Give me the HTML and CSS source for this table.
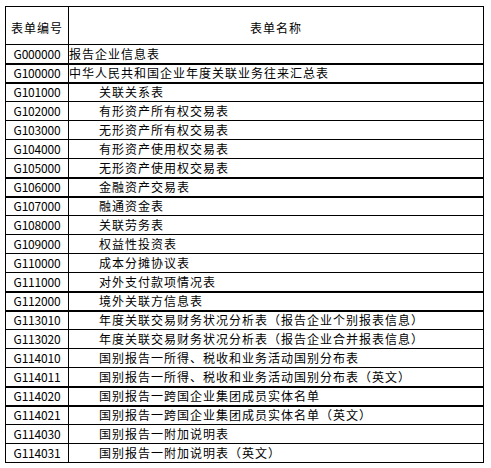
FILE: index.html
```html
<!DOCTYPE html>
<html lang="zh-CN">
<head>
<meta charset="utf-8">
<title>表单</title>
<link rel="stylesheet" href="styles.css">
</head>
<body>
<div class="page">
<table class="forms">
  <colgroup><col class="c-code"><col class="c-name"></colgroup>
  <thead>
    <tr class="head"><th>表单编号</th><th>表单名称</th></tr>
  </thead>
  <tbody>
    <tr class="thick"><td class="code">G000000</td><td class="name">报告企业信息表</td></tr>
    <tr class="thick"><td class="code">G100000</td><td class="name">中华人民共和国企业年度关联业务往来汇总表</td></tr>
    <tr><td class="code">G101000</td><td class="name sub">关联关系表</td></tr>
    <tr><td class="code">G102000</td><td class="name sub">有形资产所有权交易表</td></tr>
    <tr><td class="code">G103000</td><td class="name sub">无形资产所有权交易表</td></tr>
    <tr><td class="code">G104000</td><td class="name sub">有形资产使用权交易表</td></tr>
    <tr class="thick"><td class="code">G105000</td><td class="name sub">无形资产使用权交易表</td></tr>
    <tr class="thick"><td class="code">G106000</td><td class="name sub">金融资产交易表</td></tr>
    <tr><td class="code">G107000</td><td class="name sub">融通资金表</td></tr>
    <tr><td class="code">G108000</td><td class="name sub">关联劳务表</td></tr>
    <tr><td class="code">G109000</td><td class="name sub">权益性投资表</td></tr>
    <tr><td class="code">G110000</td><td class="name sub">成本分摊协议表</td></tr>
    <tr class="thick"><td class="code">G111000</td><td class="name sub">对外支付款项情况表</td></tr>
    <tr class="thick"><td class="code">G112000</td><td class="name sub">境外关联方信息表</td></tr>
    <tr><td class="code">G113010</td><td class="name sub">年度关联交易财务状况分析表（报告企业个别报表信息）</td></tr>
    <tr><td class="code">G113020</td><td class="name sub">年度关联交易财务状况分析表（报告企业合并报表信息）</td></tr>
    <tr><td class="code">G114010</td><td class="name sub">国别报告一所得、税收和业务活动国别分布表</td></tr>
    <tr class="thick"><td class="code">G114011</td><td class="name sub">国别报告一所得、税收和业务活动国别分布表（英文）</td></tr>
    <tr class="thick"><td class="code">G114020</td><td class="name sub">国别报告一跨国企业集团成员实体名单</td></tr>
    <tr><td class="code">G114021</td><td class="name sub">国别报告一跨国企业集团成员实体名单（英文）</td></tr>
    <tr><td class="code">G114030</td><td class="name sub">国别报告一附加说明表</td></tr>
    <tr><td class="code">G114031</td><td class="name sub">国别报告一附加说明表（英文）</td></tr>
  </tbody>
</table>
</div>
</body>
</html>
```
FILE: styles.css
```css
html, body {
  margin: 0;
  padding: 0;
  background: #fff;
}
.page {
  padding: 6px 0 0 5px;
}
.forms {
  border-collapse: collapse;
  table-layout: fixed;
  width: 479px;
  color: #000;
  font-family: "Noto Sans CJK SC", "Noto Sans CJK TC", sans-serif;
  font-size: 12px;
  letter-spacing: 1px;
}
.c-code { width: 63px; }
.forms th, .forms td {
  border: 1px solid #000;
  padding: 0;
  white-space: nowrap;
  overflow: hidden;
}
.forms th {
  font-weight: normal;
  text-align: center;
  vertical-align: middle;
  padding-top: 3px;
}
.head { height: 38px; }
.forms tbody tr { height: 19px; }
.forms td {
  vertical-align: bottom;
  line-height: 16px;
  padding-bottom: 1px;
}
.forms tr.thick td { border-bottom: 2px solid #000; }
.code {
  text-align: center;
  font-family: "Noto Sans CJK SC", "Noto Sans", sans-serif;
  font-size: 12px;
  letter-spacing: -0.2px;
  color: #000;
}
.name {
  text-align: left;
  padding-left: 3px;
}
.name.sub { padding-left: 30px; }
```
